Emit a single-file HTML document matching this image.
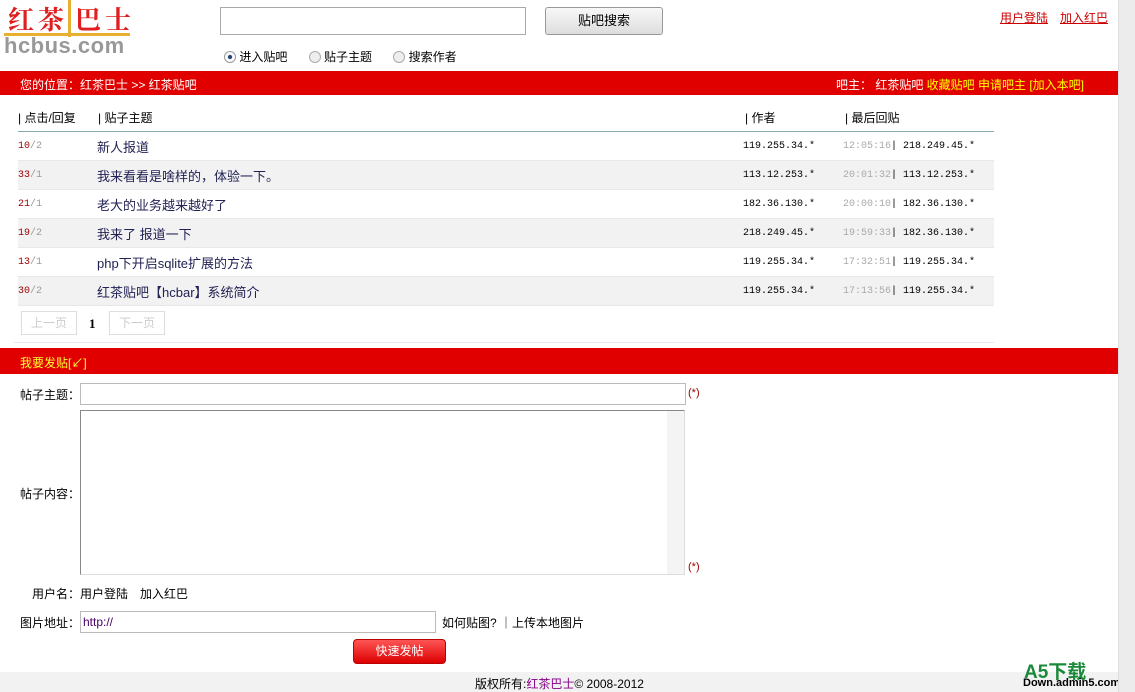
<!DOCTYPE html>
<html><head><meta charset="utf-8"><style>
*{margin:0;padding:0;box-sizing:border-box}
body{width:1135px;height:692px;position:relative;overflow:hidden;background:#fff;font-family:"Liberation Sans","Noto Sans CJK SC",sans-serif;font-size:12px;color:#000}
.a{position:absolute;white-space:nowrap}
.bar{position:absolute;left:0;width:1118px;background:#e00000;color:#fff}
.row{position:absolute;left:18px;width:976px;height:29px;border-bottom:1px solid #e8e8e8}
.row span{position:absolute;top:9px}
.g{background:#f2f2f2}
.mono{font-family:"Liberation Mono","Noto Sans CJK SC",monospace;font-size:10px}
</style></head><body>
<div class="a" style="left:8px;top:4px;font-size:26px;font-weight:bold;color:#e02020;letter-spacing:4px;font-family:'Noto Serif CJK SC',serif;line-height:30px">红茶<span style="border-left:3px solid #e8b030;padding-left:4px">巴士</span></div>
<div class="a" style="left:4px;top:35px;font-size:22px;font-weight:bold;color:#999;line-height:22px;letter-spacing:0.5px">hcbus.com</div>
<div class="a" style="left:4px;top:33px;width:126px;height:3px;background:#e8b030"></div>
<div class="a" style="left:220px;top:7px;width:306px;height:28px;border:1px solid #aaa"></div>
<div class="a" style="left:545px;top:7px;width:118px;height:28px;border:1px solid #999;border-radius:3px;background:linear-gradient(#f8f8f8,#ddd);text-align:center;line-height:26px;font-size:13px">贴吧搜索</div>
<div class="a" style="left:224px;top:50px;line-height:15px">
<span style="display:inline-block;width:12px;height:12px;border:1px solid #999;border-radius:50%;vertical-align:-2px;background:radial-gradient(#247 25%,#fff 35%)"></span> 进入贴吧　
<span style="display:inline-block;width:12px;height:12px;border:1px solid #aaa;border-radius:50%;vertical-align:-2px;background:#eee;margin-left:6px"></span> 贴子主题　
<span style="display:inline-block;width:12px;height:12px;border:1px solid #aaa;border-radius:50%;vertical-align:-2px;background:#eee;margin-left:6px"></span> 搜索作者</div>
<div class="a" style="left:1000px;top:9px;color:#c00;text-decoration:underline">用户登陆</div>
<div class="a" style="left:1060px;top:9px;color:#c00;text-decoration:underline">加入红巴</div>
<div class="bar" style="top:71px;height:24px"><span class="a" style="left:20px;top:5px">您的位置：红茶巴士 &gt;&gt; 红茶贴吧</span>
<span class="a" style="left:836px;top:5px">吧主： 红茶贴吧 <span style="color:#ff0">收藏贴吧 申请吧主 [加入本吧]</span></span></div>
<div class="a" style="left:18px;top:109px">| 点击/回复</div>
<div class="a" style="left:98px;top:109px">| 贴子主题</div>
<div class="a" style="left:745px;top:109px">| 作者</div>
<div class="a" style="left:845px;top:109px">| 最后回贴</div>
<div class="a" style="left:18px;top:131px;width:976px;height:1px;background:#8aa"></div>
<div class="row" style="top:132px"><span class="mono" style="color:#900">10<i style="color:#999;font-style:normal">/2</i></span><span style="left:79px;top:5px;font-size:13px;color:#225">新人报道</span><span class="mono" style="left:725px">119.255.34.*</span><span class="mono" style="left:825px;color:#aaa">12:05:16<b style="color:#000;font-weight:normal">| 218.249.45.*</b></span></div>
<div class="row g" style="top:161px"><span class="mono" style="color:#900">33<i style="color:#999;font-style:normal">/1</i></span><span style="left:79px;top:5px;font-size:13px;color:#225">我来看看是啥样的，体验一下。</span><span class="mono" style="left:725px">113.12.253.*</span><span class="mono" style="left:825px;color:#aaa">20:01:32<b style="color:#000;font-weight:normal">| 113.12.253.*</b></span></div>
<div class="row" style="top:190px"><span class="mono" style="color:#900">21<i style="color:#999;font-style:normal">/1</i></span><span style="left:79px;top:5px;font-size:13px;color:#225">老大的业务越来越好了</span><span class="mono" style="left:725px">182.36.130.*</span><span class="mono" style="left:825px;color:#aaa">20:00:10<b style="color:#000;font-weight:normal">| 182.36.130.*</b></span></div>
<div class="row g" style="top:219px"><span class="mono" style="color:#900">19<i style="color:#999;font-style:normal">/2</i></span><span style="left:79px;top:5px;font-size:13px;color:#225">我来了 报道一下</span><span class="mono" style="left:725px">218.249.45.*</span><span class="mono" style="left:825px;color:#aaa">19:59:33<b style="color:#000;font-weight:normal">| 182.36.130.*</b></span></div>
<div class="row" style="top:248px"><span class="mono" style="color:#900">13<i style="color:#999;font-style:normal">/1</i></span><span style="left:79px;top:5px;font-size:13px;color:#225">php下开启sqlite扩展的方法</span><span class="mono" style="left:725px">119.255.34.*</span><span class="mono" style="left:825px;color:#aaa">17:32:51<b style="color:#000;font-weight:normal">| 119.255.34.*</b></span></div>
<div class="row g" style="top:277px"><span class="mono" style="color:#900">30<i style="color:#999;font-style:normal">/2</i></span><span style="left:79px;top:5px;font-size:13px;color:#225">红茶贴吧【hcbar】系统简介</span><span class="mono" style="left:725px">119.255.34.*</span><span class="mono" style="left:825px;color:#aaa">17:13:56<b style="color:#000;font-weight:normal">| 119.255.34.*</b></span></div>
<div class="a" style="left:21px;top:311px;width:56px;height:24px;border:1px solid #ddd;color:#ccc;text-align:center;line-height:22px">上一页</div>
<div class="a" style="left:89px;top:316px;font-weight:bold;font-family:'Liberation Serif',serif;font-size:13px">1</div>
<div class="a" style="left:109px;top:311px;width:56px;height:24px;border:1px solid #ddd;color:#ccc;text-align:center;line-height:22px">下一页</div>
<div class="a" style="left:14px;top:342px;width:980px;height:1px;background:#e4eaf0"></div>
<div class="bar" style="top:348px;height:26px;color:#ff3"><span class="a" style="left:20px;top:6px">我要发贴[↙]</span></div>
<div class="a" style="left:20px;top:386px">帖子主题：</div>
<div class="a" style="left:80px;top:383px;width:606px;height:22px;border:1px solid #bbb"></div>
<div class="a" style="left:688px;top:387px;color:#900;font-size:11px">(*)</div>
<div class="a" style="left:80px;top:410px;width:605px;height:165px;border:1px solid #888;border-right-color:#ddd;border-bottom-color:#ddd"></div>
<div class="a" style="left:667px;top:411px;width:17px;height:163px;background:#f4f4f4"></div>
<div class="a" style="left:20px;top:485px">帖子内容：</div>
<div class="a" style="left:688px;top:561px;color:#900;font-size:11px">(*)</div>
<div class="a" style="left:32px;top:585px">用户名：用户登陆　加入红巴</div>
<div class="a" style="left:20px;top:614px">图片地址：</div>
<div class="a" style="left:80px;top:611px;width:356px;height:22px;border:1px solid #bbb;color:#406;padding:3px 2px">http://</div>
<div class="a" style="left:442px;top:614px">如何贴图? ｜上传本地图片</div>
<div class="a" style="left:353px;top:639px;width:93px;height:25px;border:1px solid #b00;border-radius:4px;background:linear-gradient(#f55,#d00);color:#fff;text-align:center;line-height:23px">快速发帖</div>
<div class="a" style="left:0;top:672px;width:1118px;height:20px;background:#f2f2f2"></div>
<div class="a" style="left:475px;top:675px">版权所有:<span style="color:#808">红茶巴士</span>© 2008-2012</div>
<div class="a" style="left:1024px;top:657px;font-size:19px;font-weight:bold;color:#1a8a3a">A5下载</div>
<div class="a" style="left:1023px;top:677px;font-size:11px;font-weight:bold">Down.admin5.com</div>
<div class="a" style="left:1118px;top:0;width:17px;height:692px;background:#ececec;border-left:1px solid #ddd"></div>
</body></html>
